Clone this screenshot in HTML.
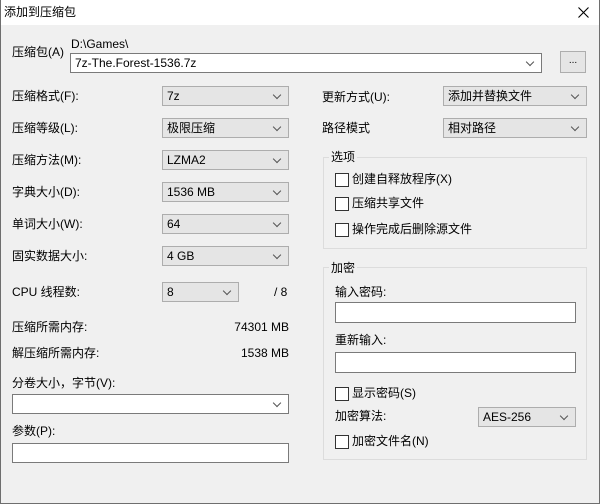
<!DOCTYPE html>
<html><head><meta charset="utf-8"><style>
*{box-sizing:border-box;margin:0;padding:0}
body{width:600px;height:504px;overflow:hidden;background:#f0f0f0;font-family:"Liberation Sans","Noto Sans CJK SC",sans-serif;font-size:12px;color:#000;position:relative}
.win{position:absolute;left:0;top:0;width:600px;height:504px;border:1px solid #6e6e6e;border-top:none}
.title{position:absolute;left:0;top:0;width:600px;height:25px;background:#fff}
.t{position:absolute;white-space:nowrap;line-height:14px}
.cb{position:absolute;background:#e5e5e5;border:1px solid #adadad;height:20px;padding-left:4px;line-height:18px}
.cb.arr:after{content:"";position:absolute;right:8px;top:5px;width:5px;height:5px;border-right:1px solid #555;border-bottom:1px solid #555;transform:rotate(45deg)}
.in{position:absolute;background:#fff;border:1px solid #7a7a7a;height:20px;padding-left:4px;line-height:18px}
.in.dd:after{content:"";position:absolute;right:8px;top:5px;width:5px;height:5px;border-right:1px solid #555;border-bottom:1px solid #555;transform:rotate(45deg)}
.grp{position:absolute;border:1px solid #dcdcdc}
.gl{position:absolute;background:#f0f0f0;padding:0 2px;line-height:14px}
.ck{position:absolute;white-space:nowrap;line-height:14px;padding-left:17px}
.ck:before{content:"";position:absolute;left:0;top:1px;width:12px;height:12px;border:1px solid #333;background:#fff}
</style></head><body>
<div class="title"></div>
<div class="t" style="left:4px;top:5px">添加到压缩包</div>
<svg style="position:absolute;left:578px;top:7px" width="11" height="11"><path d="M0.5 0.5L10.5 10.5M10.5 0.5L0.5 10.5" stroke="#000" stroke-width="1.1"/></svg>
<div class="win"></div>

<div class="t" style="left:12px;top:45px">压缩包(A)</div>
<div class="t" style="left:71px;top:37px">D:\Games\</div>
<div class="in dd" style="left:70px;top:53px;width:472px;height:20px">7z-The.Forest-1536.7z</div>
<div class="cb" style="left:560px;top:51px;width:26px;height:22px;text-align:center;padding:0;font-size:10px">...</div>

<div class="t" style="left:12px;top:89px">压缩格式(F):</div>
<div class="cb arr" style="left:162px;top:86px;width:127px">7z</div>
<div class="t" style="left:12px;top:121px">压缩等级(L):</div>
<div class="cb arr" style="left:162px;top:118px;width:127px">极限压缩</div>
<div class="t" style="left:12px;top:153px">压缩方法(M):</div>
<div class="cb arr" style="left:162px;top:150px;width:127px">LZMA2</div>
<div class="t" style="left:12px;top:185px">字典大小(D):</div>
<div class="cb arr" style="left:162px;top:182px;width:127px">1536 MB</div>
<div class="t" style="left:12px;top:217px">单词大小(W):</div>
<div class="cb arr" style="left:162px;top:214px;width:127px">64</div>
<div class="t" style="left:12px;top:249px">固实数据大小:</div>
<div class="cb arr" style="left:162px;top:246px;width:127px">4 GB</div>
<div class="t" style="left:12px;top:285px">CPU 线程数:</div>
<div class="cb arr" style="left:162px;top:282px;width:77px">8</div>
<div class="t" style="left:274px;top:285px">/ 8</div>
<div class="t" style="left:12px;top:320px">压缩所需内存:</div>
<div class="t" style="left:200px;top:320px;width:89px;text-align:right">74301 MB</div>
<div class="t" style="left:12px;top:346px">解压缩所需内存:</div>
<div class="t" style="left:200px;top:346px;width:89px;text-align:right">1538 MB</div>
<div class="t" style="left:12px;top:376px">分卷大小，字节(V):</div>
<div class="in dd" style="left:12px;top:394px;width:277px">&nbsp;</div>
<div class="t" style="left:12px;top:424px">参数(P):</div>
<div class="in" style="left:12px;top:443px;width:277px">&nbsp;</div>

<div class="t" style="left:322px;top:90px">更新方式(U):</div>
<div class="cb arr" style="left:443px;top:86px;width:144px">添加并替换文件</div>
<div class="t" style="left:322px;top:121px">路径模式</div>
<div class="cb arr" style="left:443px;top:118px;width:144px">相对路径</div>

<div class="grp" style="left:323px;top:157px;width:264px;height:92px"></div>
<div class="gl" style="left:329px;top:150px">选项</div>
<div class="ck" style="left:335px;top:172px">创建自释放程序(X)</div>
<div class="ck" style="left:335px;top:196px">压缩共享文件</div>
<div class="ck" style="left:335px;top:222px">操作完成后删除源文件</div>

<div class="grp" style="left:323px;top:267px;width:264px;height:193px"></div>
<div class="gl" style="left:329px;top:261px">加密</div>
<div class="t" style="left:335px;top:285px">输入密码:</div>
<div class="in" style="left:335px;top:302px;width:241px;height:21px">&nbsp;</div>
<div class="t" style="left:335px;top:333px">重新输入:</div>
<div class="in" style="left:335px;top:352px;width:241px;height:21px">&nbsp;</div>
<div class="ck" style="left:335px;top:386px">显示密码(S)</div>
<div class="t" style="left:335px;top:409px">加密算法:</div>
<div class="cb arr" style="left:478px;top:407px;width:98px">AES-256</div>
<div class="ck" style="left:335px;top:434px">加密文件名(N)</div>
</body></html>
